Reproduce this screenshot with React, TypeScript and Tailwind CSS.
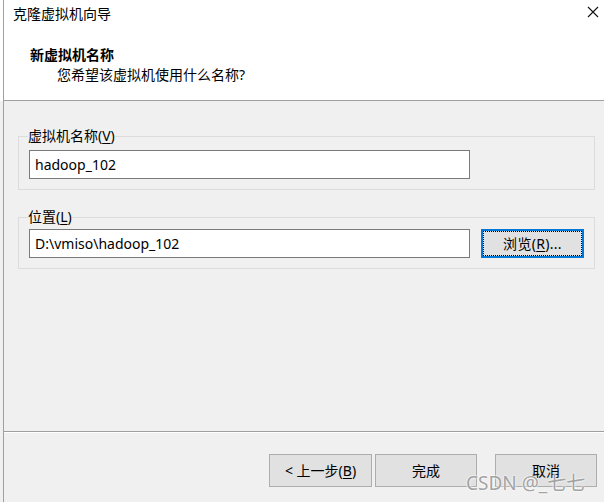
import React from "react";

const font = { fontFamily: '"Noto Sans", "Noto Sans CJK SC", sans-serif' };

function Btn({ children, className = "" }: { children: React.ReactNode; className?: string }) {
  return (
    <div
      className={
        "h-[33px] flex items-center justify-center bg-[#e1e1e1] border border-[#adadad] text-[14px] text-black leading-[20px] " +
        className
      }
    >
      {children}
    </div>
  );
}

export default function App() {
  return (
    <div className="w-[604px] h-[502px] bg-[#f0f0f0] flex overflow-hidden relative" style={font}>
      <div className="w-[3px] flex flex-col">
        <div className="h-[101px] bg-white" />
        <div className="flex-1 bg-[#f0f0f0]" />
      </div>
      <div className="flex-1 flex flex-col border-l border-[#a0a0a0]">
        {/* Header */}
        <div className="h-[101px] bg-white border-b border-[#a0a0a0] flex flex-col relative">
          <div className="pl-[9px] pt-[4px] text-[14px] leading-[20px] text-black">克隆虚拟机向导</div>
          <div className="absolute right-[5px] top-[6px] w-[12px] h-[12px]">
            <svg width="12" height="12" viewBox="0 0 12 12">
              <path d="M1 1 L11 11 M11 1 L1 11" stroke="#111" strokeWidth="1.1" />
            </svg>
          </div>
          <div className="pl-[26px] pt-[21px] text-[14px] leading-[20px] font-bold text-black">新虚拟机名称</div>
          <div className="pl-[53px] text-[14px] leading-[20px] text-black">您希望该虚拟机使用什么名称?</div>
        </div>

        {/* Body */}
        <div className="flex-1 flex flex-col">
          <fieldset className="ml-[14px] mr-[9px] mt-[25px] border border-[#dcdcdc] px-[10px] pb-[10px]">
            <legend className="text-[14px] leading-[20px] text-black -ml-[1px] px-0">
              虚拟机名称(<span className="underline underline-offset-2">V</span>)
            </legend>
            <div className="mt-[4px] w-[441px] h-[29px] bg-white border border-[#7a7a7a] flex items-center pl-[5px] text-[14px] text-black">
              hadoop_102
            </div>
          </fieldset>

          <fieldset className="ml-[14px] mr-[9px] mt-[17px] border border-[#dcdcdc] px-[10px] pb-[10px]">
            <legend className="text-[14px] leading-[20px] text-black -ml-[1px] px-0">
              位置(<span className="underline underline-offset-2">L</span>)
            </legend>
            <div className="mt-[2px] flex gap-[11px]">
              <div className="w-[441px] h-[29px] bg-white border border-[#7a7a7a] flex items-center pl-[5px] text-[14px] text-black">
                D:\vmiso\hadoop_102
              </div>
              <div className="w-[103px] h-[29px] bg-[#e1e1e1] border-2 border-[#0078d7] p-0">
                <div className="w-full h-full border border-dotted border-black flex items-center justify-center text-[14px] leading-[20px] text-black tracking-[0.3px]">
                  浏览(<span className="underline underline-offset-2">R</span>)...
                </div>
              </div>
            </div>
          </fieldset>
        </div>

        {/* Footer */}
        <div className="h-[71px] border-t border-[#a0a0a0] flex flex-col">
          <div className="h-[1px] bg-white" />
          <div className="flex justify-end pt-[21px] pr-[7px]">
            <Btn className="w-[103px]">
              &lt; 上一步(<span className="underline underline-offset-2">B</span>)
            </Btn>
            <Btn className="w-[102px] ml-[3px]">完成</Btn>
            <Btn className="w-[102px] ml-[18px]">取消</Btn>
          </div>
        </div>
      </div>

      <div
        className="absolute left-[466px] top-[471px] text-[19px] leading-[24px] text-[#a3a3a3] pointer-events-none"
        style={{ fontFamily: '"Noto Sans", "Noto Sans CJK SC", sans-serif', textShadow: "0 0 2px #fff, 0 0 2px #fff" }}
      >
        CSDN @_七七
      </div>
    </div>
  );
}
